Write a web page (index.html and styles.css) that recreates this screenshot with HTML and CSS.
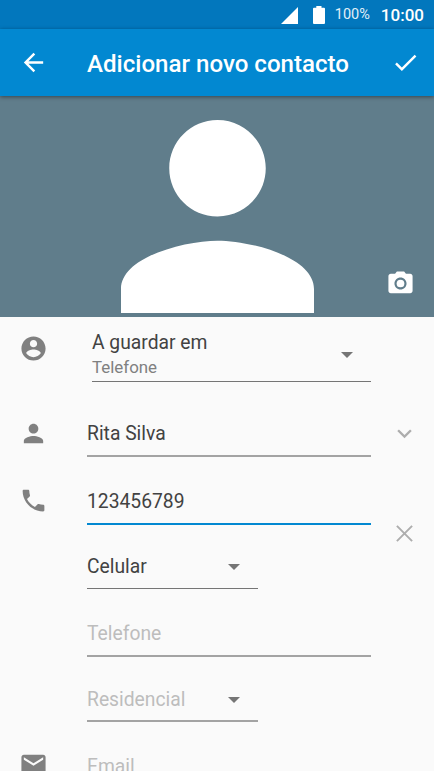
FILE: index.html
```html
<!DOCTYPE html>
<html lang="pt">
<head>
<meta charset="utf-8">
<title>Adicionar novo contacto</title>
<link rel="stylesheet" href="styles.css">
</head>
<body>
<div class="status-bar">
  <svg class="signal" viewBox="0 0 17 17"><path d="M17 0v17H0z"/></svg>
  <svg class="battery" viewBox="0 0 12 18"><path d="M3.3 0h5.2v1.8H11q1 0 1 1V17q0 1-1 1H1q-1 0-1-1V2.800q0-1 1-1h2.300z"/></svg>
  <span class="percent">100%</span>
  <span class="clock">10:00</span>
</div>
<header class="app-bar">
  <svg class="icon" viewBox="0 0 24 24"><path d="M20 11H7.830l5.590-5.590L12 4l-8 8 8 8 1.410-1.410L7.830 13H20v-2z"/></svg>
  <h1 class="title">Adicionar novo contacto</h1>
  <svg class="icon" viewBox="0 0 24 24"><path d="M9 16.170L4.830 12l-1.420 1.410L9 19 21 7l-1.410-1.410z"/></svg>
</header>
<section class="photo">
  <svg class="portrait" viewBox="4 4 16 16"><path d="M12 12c2.210 0 4-1.790 4-4s-1.790-4-4-4-4 1.790-4 4 1.790 4 4 4zm0 2c-2.670 0-8 1.340-8 4v2h16v-2c0-2.660-5.330-4-8-4z"/></svg>
  <svg class="icon camera" viewBox="0 0 24 24"><circle cx="12" cy="12" r="3.200"/><path d="M9 2L7.500 4H4c-1.100 0-2 .900-2 2v12c0 1.100.900 2 2 2h16c1.100 0 2-.900 2-2V6c0-1.100-.900-2-2-2h-3.500L15 2H9zm3 15c-2.760 0-5-2.240-5-5s2.240-5 5-5 5 2.240 5 5-2.240 5-5 5z"/></svg>
</section>
<main class="form">
  <div class="row account">
    <svg class="icon lead" viewBox="0 0 24 24"><path d="M12 2C6.480 2 2 6.480 2 12s4.480 10 10 10 10-4.480 10-10S17.520 2 12 2zm0 3c1.660 0 3 1.340 3 3s-1.340 3-3 3-3-1.340-3-3 1.340-3 3-3zm0 14.200c-2.500 0-4.710-1.280-6-3.220.030-1.990 4-3.080 6-3.080 1.990 0 5.970 1.090 6 3.080-1.290 1.940-3.500 3.220-6 3.220z"/></svg>
    <div class="field select thin">
      <div class="stack"><span>A guardar em</span><small>Telefone</small></div>
      <svg class="caret" viewBox="0 0 12 6"><path d="M0 0h12L6 6z"/></svg>
    </div>
  </div>
  <div class="row name">
    <svg class="icon lead" viewBox="0 0 24 24"><path d="M12 12c2.210 0 4-1.790 4-4s-1.790-4-4-4-4 1.790-4 4 1.790 4 4 4zm0 2c-2.670 0-8 1.340-8 4v2h16v-2c0-2.660-5.330-4-8-4z"/></svg>
    <div class="field">Rita Silva</div>
    <svg class="icon trail" viewBox="0 0 24 24"><path d="M16.590 8.590L12 13.170 7.410 8.590 6 10l6 6 6-6z"/></svg>
  </div>
  <div class="phones">
    <div class="entries">
      <div class="row number">
        <svg class="icon lead" viewBox="0 0 24 24"><path d="M6.620 10.790c1.440 2.830 3.760 5.140 6.590 6.590l2.200-2.200c.270-.270.670-.360 1.020-.240 1.120.370 2.330.570 3.570.570.550 0 1 .450 1 1V20c0 .550-.450 1-1 1-9.390 0-17-7.610-17-17 0-.550.450-1 1-1h3.500c.550 0 1 .450 1 1 0 1.250.200 2.450.570 3.570.110.350.030.740-.250 1.020l-2.200 2.200z"/></svg>
        <div class="field focused">123456789</div>
      </div>
      <div class="row type">
        <div class="field select short thin"><span>Celular</span><svg class="caret" viewBox="0 0 12 6"><path d="M0 0h12L6 6z"/></svg></div>
      </div>
    </div>
    <svg class="icon clear" viewBox="0 0 24 24"><path d="M5.700 5.700l12.600 12.600M18.300 5.700L5.700 18.300"/></svg>
  </div>
  <div class="row number">
    <div class="field hint">Telefone</div>
  </div>
  <div class="row home">
    <div class="field select short hint"><span>Residencial</span><svg class="caret" viewBox="0 0 12 6"><path d="M0 0h12L6 6z"/></svg></div>
  </div>
  <div class="row email">
    <svg class="icon lead" viewBox="0 0 24 24"><path d="M20 4H4c-1.100 0-1.990.900-1.990 2L2 18c0 1.100.900 2 2 2h16c1.100 0 2-.900 2-2V6c0-1.100-.900-2-2-2zm0 4l-8 5-8-5V6l8 5 8-5v2z"/></svg>
    <div class="field hint">Email</div>
  </div>
</main>
</body>
</html>
```
FILE: styles.css
```css
* { box-sizing: border-box; }

body {
  margin: 0;
  width: 434px;
  height: 771px;
  overflow: hidden;
  display: flex;
  flex-direction: column;
  background: #fafafa;
  color: #424242;
  font: 19.3px/24px Roboto, sans-serif;
}

svg { display: block; flex: none; fill: currentColor; }
.icon { width: 29px; height: 29px; }

.status-bar {
  flex: none;
  height: 29px;
  padding: 1px 10px 0 0;
  display: flex;
  justify-content: flex-end;
  align-items: center;
  background: #0277bd;
  color: #fff;
}
.signal { width: 17px; height: 17px; margin-right: 15px; }
.battery { width: 12px; height: 18px; margin-right: 10px; }
.percent { font-size: 14.5px; margin-right: 11px; color: #e1eff8; }
.clock { font-size: 17px; font-weight: 500; }

.app-bar {
  position: relative;
  flex: none;
  height: 67px;
  padding: 0 14px 0 19px;
  display: flex;
  align-items: center;
  background: #0288d1;
  color: #fff;
  box-shadow: 0 1px 4px rgba(0, 0, 0, .45);
}
.title {
  flex: 1;
  margin: 2px 0 0 39px;
  font-size: 24.1px;
  font-weight: 500;
  line-height: 30px;
  white-space: nowrap;
}

.photo {
  flex: none;
  height: 221.400px;
  padding-top: 24.200px;
  display: grid;
  grid-template-columns: 1fr 193px 1fr;
  background: #607d8b;
  color: #fff;
}
.portrait { grid-column: 2; width: 193px; height: 193px; }
.camera { align-self: end; justify-self: end; margin: 0 19px 19px 0; }

.form { flex: 1; display: flex; flex-direction: column; margin-top: -.4px; }
.row { flex: none; display: flex; align-items: flex-start; }
.lead { width: 29px; margin: 0 39px 0 19px; color: #808080; }
.field {
  align-self: stretch;
  width: 284px;
  border-bottom: 2px solid #a3a3a3;
}
.row > .field:first-child { margin-left: 87px; }
.select { display: flex; justify-content: space-between; }
.short { width: 171px; }
.thin { border-bottom: 1px solid #757575; }
.focused { border-color: #0288d1; }
.hint { color: #bdbdbd; }
.caret { width: 12px; height: 6px; margin-right: 18px; color: #757575; }

.account { height: 65px; padding-top: 14px; }
.account .lead { margin-top: 3px; margin-right: 44px; }
.account .field { width: 279px; }
.account .caret { margin-top: 20.500px; }
.stack { display: flex; flex-direction: column; }
.stack small { font-size: 16.9px; color: #808080; }

.name { height: 75px; padding-top: 40px; }
.name .lead { margin-top: -3px; }
.name .trail { margin: -3px 0 0 19px; color: #adadad; }

.phones { display: flex; align-items: flex-start; }
.number { height: 68px; padding-top: 33px; }
.number .lead { margin-top: -4px; }
.type { height: 64px; padding-top: 30px; }
.type .caret { margin-top: 9px; }
.home { height: 65px; padding-top: 31px; }
.home .caret { margin-top: 9px; }
.clear { margin: 62px 0 0 19px; fill: none; stroke: #adadad; stroke-width: 1.600; }
.email { height: 49px; padding-top: 33px; }
.email .lead { margin-top: -5px; }
.email .field { border: 0; }
```
